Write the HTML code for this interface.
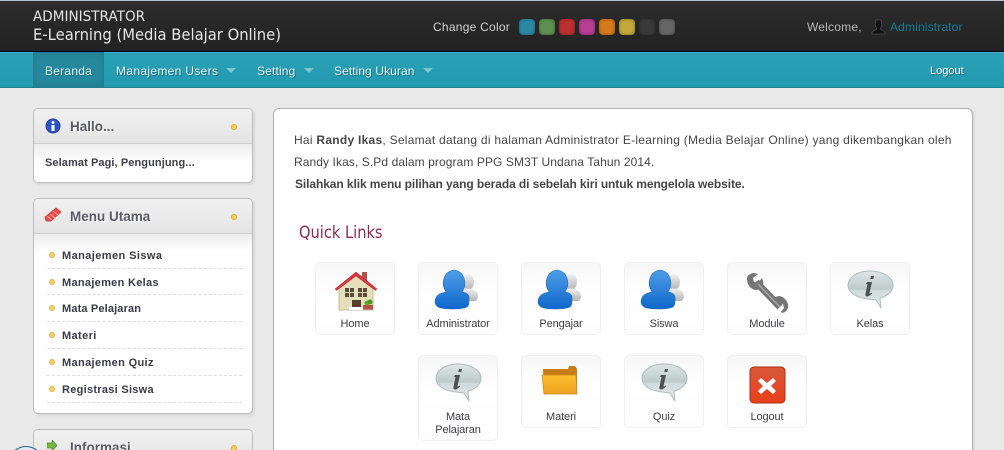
<!DOCTYPE html>
<html><head><meta charset="utf-8"><style>
*{box-sizing:border-box;margin:0;padding:0}
html,body{width:1004px;height:450px;overflow:hidden;background:#e9e9e9;font-family:"Liberation Sans",sans-serif;font-size:12px;color:#444}
#wrap{position:relative;width:1004px;height:450px;overflow:hidden;background:#e9e9e9}
.a{position:absolute;white-space:nowrap}
#hd{position:absolute;left:0;top:0;width:1004px;height:52px;background:linear-gradient(#2c2c2c,#222);border-top:1px solid #b3c0d6;border-bottom:1px solid #000}
#nav{position:absolute;left:0;top:52px;width:1004px;height:36px;background:linear-gradient(#2ba1b5,#229ab0);border-top:1px solid #3cb9ce;border-bottom:1px solid #1b8193}
.n{position:absolute;top:64px;color:#e8f4f6;font-size:12px;text-shadow:1px 1px 0 #1a6f80;white-space:nowrap}
.tri{position:absolute;top:68px;width:0;height:0;border-left:5px solid transparent;border-right:5px solid transparent;border-top:5px solid #7fc6d3}
.h1{font-family:"DejaVu Sans",sans-serif;color:#e6e6e6}
.sw{position:absolute;top:19px;width:16px;height:16px;border-radius:4px;box-shadow:inset 0 0 3px rgba(0,0,0,.35)}
.box{position:absolute;left:33px;width:220px;background:#fff;border:1px solid #bdbdbd;border-radius:5px;box-shadow:2px 2px 2px rgba(0,0,0,.07)}
.bh{position:absolute;left:0;top:0;width:218px;height:35px;background:linear-gradient(#f0f0f0,#e4e4e4);border-bottom:1px solid #cfcfcf;border-radius:4px 4px 0 0}
.fade{position:absolute;left:0;top:35px;width:218px;height:18px;background:linear-gradient(#ececec,#fff)}
.bt{position:absolute;left:36px;top:10px;font-size:13.5px;font-weight:bold;color:#5a5a64;white-space:nowrap;text-shadow:1px 1px 0 #fff}
.dot{position:absolute;left:197px;top:15px;width:6px;height:6px;border-radius:50%;background:#f3cf62;border:1px solid #e0ab33}
.mi{position:absolute;left:62px;font-size:11px;font-weight:bold;color:#3a3a46;white-space:nowrap}
.md{position:absolute;left:49px;width:6px;height:6px;border-radius:50%;background:#f3d26c;border:1px solid #e2b445}
.ml{position:absolute;left:47px;width:195px;border-top:1px dashed #dcdcdc}
#main{position:absolute;left:273px;top:108px;width:700px;height:342px;background:#fff;border:1px solid #b0b0b0;border-bottom:0;border-radius:6px 6px 0 0;box-shadow:1px 1px 2px rgba(0,0,0,.1)}
.p{position:absolute;font-size:12px;color:#454545;white-space:nowrap}
.tile{position:absolute;width:80px;height:73px;background:linear-gradient(#f7f7f7,#fff 45%,#fdfdfd);border:1px solid #f0f0f0;border-radius:5px}
.tile span{position:absolute;left:0;width:78px;text-align:center;top:55px;font-size:11px;line-height:13px;color:#3c3c44;letter-spacing:-.1px}
.tile svg{position:absolute;left:14px;top:4px}
</style></head><body><div id="wrap">
<svg width="0" height="0" style="position:absolute"><defs>
<linearGradient id="bl" x1="0" y1="0" x2="0" y2="1"><stop offset="0" stop-color="#4f9fe6"/><stop offset="1" stop-color="#0f66cc"/></linearGradient>
<linearGradient id="gy" x1="0" y1="0" x2="0" y2="1"><stop offset="0" stop-color="#f0f0f0"/><stop offset="1" stop-color="#b5b5b5"/></linearGradient>
<linearGradient id="bub" x1="0" y1="0" x2="0" y2="1"><stop offset="0" stop-color="#dfe6e6"/><stop offset=".5" stop-color="#bccaca"/><stop offset=".51" stop-color="#cfd9d9"/><stop offset="1" stop-color="#e6ecec"/></linearGradient>
<linearGradient id="fo" x1="0" y1="0" x2="0" y2="1"><stop offset="0" stop-color="#fbc02e"/><stop offset="1" stop-color="#f0a020"/></linearGradient>
<linearGradient id="rd" x1="0" y1="0" x2="0" y2="1"><stop offset="0" stop-color="#d8583a"/><stop offset="1" stop-color="#e8401a"/></linearGradient>
<symbol id="users" viewBox="0 0 50 50">
<ellipse cx="35" cy="15" rx="6" ry="8" fill="url(#gy)"/><path d="M27 23q7-3 14 0q4 2 4 6q0 4-3 5H27z" fill="url(#gy)"/>
<path d="M2 35q0-7 7-9l4-1q-3-4-3-9Q11 4 21 3q10 1 11 13q0 5-3 9l4 1q4 2 3 7q0 6-2 7q-5 2-14 2q-11 0-15-2q-3-2-3-5z" fill="url(#bl)" stroke="#0f5fb5" stroke-width=".5"/>
</symbol>
<symbol id="info" viewBox="0 0 50 50">
<path d="M25 4C13 4 3 10 3 18c0 8 9 13 20 14l8 1 5 8-1-10c8-2 13-7 13-13C48 10 37 4 25 4z" fill="url(#bub)" stroke="#aebcbc"/>
<path d="M26 9h3l-.7 3h-3zM22 15h5l-2.500 11q0 1.500 2-.5l.5 1q-3 3-5 3q-2 0-1.500-2.500l2-10h-1.500z" fill="#4c5252"/>
</symbol>
</defs></svg>

<div id="hd"></div>
<div class="a h1" style="left:33px;top:9px;font-size:14px;transform-origin:0 0;transform:scaleX(.97)">ADMINISTRATOR</div>
<div class="a h1" style="left:33px;top:25px;font-size:16px;transform-origin:0 0;transform:scaleX(.923)">E-Learning (Media Belajar Online)</div>
<div class="a" style="left:433px;top:20px;color:#d0d0d0;letter-spacing:.25px">Change Color</div>
<div class="sw" style="left:519px;background:#2b8aa3"></div>
<div class="sw" style="left:539px;background:#5d9050"></div>
<div class="sw" style="left:559px;background:#bd3030"></div>
<div class="sw" style="left:579px;background:#b93c95"></div>
<div class="sw" style="left:599px;background:#d87a1a"></div>
<div class="sw" style="left:619px;background:#c4a83a"></div>
<div class="sw" style="left:639px;background:#3a3a3a"></div>
<div class="sw" style="left:659px;background:#666"></div>
<div class="a" style="left:807px;top:20px;color:#b8b8b8;letter-spacing:.2px">Welcome,</div>
<svg class="a" style="left:871px;top:19px" width="15" height="16"><path d="M5 1h5l1 5-2 4 5 3v2H1v-2l5-3-2-4z" fill="#111" stroke="#666" stroke-width=".5"/></svg>
<div class="a" style="left:890px;top:20px;color:#137f92;letter-spacing:.15px">Administrator</div>

<div id="nav"></div>
<div class="a" style="left:33px;top:52px;width:71px;height:35px;background:#25889c;box-shadow:inset 0 0 8px rgba(0,0,0,.12)"></div>
<div class="n" style="left:45px;letter-spacing:.25px">Beranda</div>
<div class="n" style="left:116px;letter-spacing:.33px">Manajemen Users</div><div class="tri" style="left:226px"></div>
<div class="n" style="left:257px;letter-spacing:.15px">Setting</div><div class="tri" style="left:304px"></div>
<div class="n" style="left:334px;letter-spacing:.08px">Setting Ukuran</div><div class="tri" style="left:423px"></div>
<div class="n" style="left:930px;top:65px;font-size:11px;color:#fff">Logout</div>

<div class="box" style="top:108px;height:75px"><div class="fade"></div><div class="bh">
<div class="bt">Hallo...</div><div class="dot"></div>
<svg style="position:absolute;left:11px;top:9px" width="16" height="17"><circle cx="8" cy="8" r="7" fill="#2c55c8" stroke="#1d3a9c"/><circle cx="8" cy="4.500" r="1.500" fill="#fff"/><rect x="6.500" y="7" width="3" height="6" fill="#fff"/></svg>
</div>
<div style="position:absolute;left:11px;top:48px;font-size:11px;font-weight:bold;color:#3e3e46;letter-spacing:.09px;white-space:nowrap">Selamat Pagi, Pengunjung...</div></div>

<div class="box" style="top:198px;height:216px"><div class="fade"></div><div class="bh">
<div class="bt">Menu Utama</div><div class="dot"></div>
<svg style="position:absolute;left:10px;top:8px" width="18" height="16"><path d="M1 10L12 1l5 4-10 9-5 0z" fill="#ee4b4b" stroke="#c53030" stroke-width=".7"/><path d="M3 9l5 4M6 7l5 4M9 4l5 4" stroke="#ffa0a0"/></svg>
</div></div>
<div class="md" style="top:252px"></div><div class="mi" style="top:250px;letter-spacing:.42px">Manajemen Siswa</div><div class="ml" style="top:268px"></div>
<div class="md" style="top:279px"></div><div class="mi" style="top:277px;letter-spacing:.3px">Manajemen Kelas</div><div class="ml" style="top:294px"></div>
<div class="md" style="top:305px"></div><div class="mi" style="top:303px;letter-spacing:.15px">Mata Pelajaran</div><div class="ml" style="top:321px"></div>
<div class="md" style="top:332px"></div><div class="mi" style="top:330px;letter-spacing:.38px">Materi</div><div class="ml" style="top:348px"></div>
<div class="md" style="top:359px"></div><div class="mi" style="top:357px;letter-spacing:.36px">Manajemen Quiz</div><div class="ml" style="top:375px"></div>
<div class="md" style="top:386px"></div><div class="mi" style="top:384px;letter-spacing:.28px">Registrasi Siswa</div><div class="ml" style="top:402px"></div>

<div class="box" style="top:429px;height:21px;border-bottom:0;border-radius:5px 5px 0 0;overflow:hidden;box-shadow:none"><div class="bh" style="height:20px;border-bottom:0;overflow:hidden;background:linear-gradient(#f0f0f0,#e9e9e9)">
<div class="bt" style="line-height:16px;height:20px;overflow:hidden">Informasi</div><div class="dot" style="top:15px;height:5px;border-bottom:0;border-radius:3px 3px 0 0"></div>
<svg style="position:absolute;left:13px;top:10px" width="12" height="10"><path d="M0 3h5V0l5 5.500-5 5.500V8H0z" fill="#7cb342" stroke="#4d8a26" stroke-width=".7"/></svg>
</div></div>
<svg class="a" style="left:13px;top:445px" width="26" height="5"><path d="M1 6Q13-3 25 6z" fill="#dfe9ef" stroke="#1e5a84"/></svg>

<div id="main"></div>
<div class="p" style="left:294px;top:133px;letter-spacing:.262px">Hai <b>Randy Ikas</b>, Selamat datang di halaman Administrator E-learning (Media Belajar Online) yang dikembangkan oleh</div>
<div class="p" style="left:294px;top:155px;letter-spacing:.09px">Randy Ikas, S.Pd dalam program PPG SM3T Undana Tahun 2014.</div>
<div class="p" style="left:295px;top:177px;font-weight:bold;letter-spacing:-.09px">Silahkan klik menu pilihan yang berada di sebelah kiri untuk mengelola website.</div>
<div class="a" style="left:299px;top:223px;font-family:'DejaVu Sans',sans-serif;font-size:17px;color:#8f2a58;transform-origin:0 0;transform:scaleX(.86)">Quick Links</div>

<div class="tile" style="left:315px;top:262px">
<svg width="50" height="50" viewBox="0 0 50 50"><path d="M32 5h5v9h-5z" fill="#b5504a"/><path d="M9 21L26 8l17 13v22H9z" fill="#e5e0bc" stroke="#b5ae85" stroke-width=".8"/><path d="M5 22L26 5l21 17-1.500 1.500L26 9 6.500 23.500z" fill="#d9343f" stroke="#b32630" stroke-width=".5"/><rect x="15" y="21" width="9" height="9" fill="#5c4a3a"/><rect x="28" y="21" width="9" height="9" fill="#5c4a3a"/><path d="M19.500 21v9M15 25.500h9M32.500 21v9M28 25.500h9" stroke="#e5e0bc"/><rect x="22" y="33" width="9" height="7" fill="#55402e"/><rect x="19" y="40" width="14" height="3" fill="#fff"/><rect x="33" y="38" width="10" height="4.500" fill="#b5504a"/><circle cx="37" cy="36" r="2.500" fill="#5caa2e"/><circle cx="40" cy="35" r="2.500" fill="#4a9a22"/></svg><span>Home</span></div>
<div class="tile" style="left:418px;top:262px"><svg width="50" height="50"><use href="#users"/></svg><span>Administrator</span></div>
<div class="tile" style="left:521px;top:262px"><svg width="50" height="50"><use href="#users"/></svg><span>Pengajar</span></div>
<div class="tile" style="left:624px;top:262px"><svg width="50" height="50"><use href="#users"/></svg><span>Siswa</span></div>
<div class="tile" style="left:727px;top:262px"><svg width="50" height="50" viewBox="0 0 50 50"><path d="M14 15l24 25" stroke="#757575" stroke-width="7" fill="none"/><path d="M5 13q-1-5 6-7q3 0 5 1l-5 4 1 4 4 1 4-5q2 4 1 7-2 5-8 5-7-2-8-10zM30 34q2-5 8-5 6 2 8 8 1 5-3 8l-3 1-1-1 3-4-1-4-4-1-4 4q-3-3-3-6z" fill="#757575"/><path d="M16 17l22 23" stroke="#a8a8a8" stroke-width="1.500"/></svg><span>Module</span></div>
<div class="tile" style="left:830px;top:262px"><svg width="50" height="50"><use href="#info"/></svg><span>Kelas</span></div>

<div class="tile" style="left:418px;top:355px;height:86px"><svg width="50" height="50"><use href="#info"/></svg><span>Mata<br>Pelajaran</span></div>
<div class="tile" style="left:521px;top:355px"><svg width="50" height="50" viewBox="0 0 50 50"><path d="M7 9h25l1-3h6l2 3v24H8z" fill="#c87c14"/><path d="M6 15h34l1 19H8z" fill="url(#fo)" stroke="#c88418" stroke-width=".7"/></svg><span>Materi</span></div>
<div class="tile" style="left:624px;top:355px"><svg width="50" height="50"><use href="#info"/></svg><span>Quiz</span></div>
<div class="tile" style="left:727px;top:355px"><svg width="50" height="50" viewBox="0 0 50 50"><rect x="8" y="7" width="35" height="36" rx="4" fill="url(#rd)" stroke="#a83010"/><path d="M19 18l6 5 6-5 3 3-5 5 5 5-3 3-6-5-6 5-3-3 5-5-5-5z" fill="#fff"/></svg><span>Logout</span></div>
</div></body></html>
